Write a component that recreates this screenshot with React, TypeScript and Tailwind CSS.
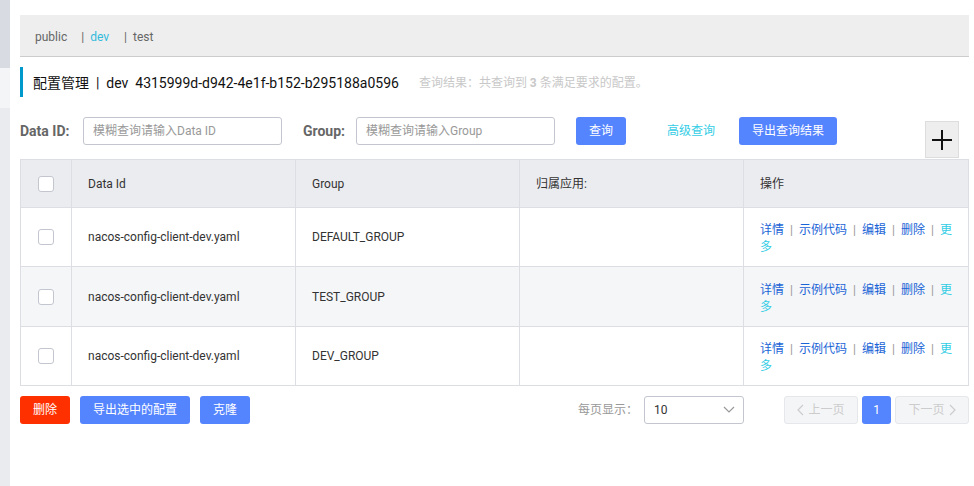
import React from "react";

const font = { fontFamily: 'Roboto, "Noto Sans CJK SC", sans-serif' };

function Checkbox() {
  return <div className="w-4 h-4 rounded-[3px] border border-[#c4c6cf] bg-white" />;
}

const rows = [
  { id: "nacos-config-client-dev.yaml", group: "DEFAULT_GROUP", bg: "bg-white", h: "h-[59px]" },
  { id: "nacos-config-client-dev.yaml", group: "TEST_GROUP", bg: "bg-[#f5f6f8]", h: "h-[60px]" },
  { id: "nacos-config-client-dev.yaml", group: "DEV_GROUP", bg: "bg-white", h: "h-[58px]" },
];

function Sep() {
  return <span className="inline-block w-[15px] text-center text-[#999]">|</span>;
}

function Ops() {
  return (
    <div className="text-[12px] leading-[17px] text-[#1964d6] pt-[4px]">
      <div className="flex">
        <span>详情</span><Sep /><span>示例代码</span><Sep /><span>编辑</span><Sep /><span>删除</span><Sep />
        <span className="text-[#33cde5]">更</span>
      </div>
      <div className="text-[#33cde5]">多</div>
    </div>
  );
}

export default function App() {
  return (
    <div className="w-[974px] h-[486px] flex bg-white overflow-hidden" style={font}>
      <div className="w-[10px] flex flex-col shrink-0">
        <div className="h-[68px] bg-[#d8dbe1]" />
        <div className="h-[40px] bg-[#f4f5f7]" />
        <div className="flex-1 bg-[#e9ebee]" />
      </div>
      <div className="flex-1 pl-[10px] pr-[5px] pt-[15px]">
        <div className="h-[42px] bg-[#eeeeee] border-b border-[#cccccc] flex items-center pt-[2px] pl-[15px] text-[12px] text-[#666]">
          <span>public</span>
          <span className="ml-[14px]">|</span>
          <span className="ml-[6px] text-[#33bbdd]">dev</span>
          <span className="ml-[15px]">|</span>
          <span className="ml-[6px]">test</span>
        </div>
        <div className="mt-[10px] h-[30px] border-l-[3px] border-[#0099cc] flex items-center pl-[10px] pt-[2px]">
          <span className="text-[14px] text-[#111]">配置管理 &nbsp;|&nbsp; dev&nbsp; 4315999d-d942-4e1f-b152-b295188a0596</span>
          <span className="ml-[20px] text-[12px] text-[#c8c8c8]">查询结果：共查询到 <b className="font-bold">3</b> 条满足要求的配置。</span>
        </div>
        <div className="mt-[20px] flex items-start">
          <div className="h-[28px] flex items-center">
            <span className="text-[14px] font-bold text-[#666] w-[63px]">Data ID:</span>
            <div className="w-[199px] h-[28px] rounded-[3px] border border-[#c4c6cf] flex items-center pl-[9px] text-[12px] text-[#999]">模糊查询请输入Data ID</div>
            <span className="ml-[21px] text-[14px] font-bold text-[#666] w-[53px]">Group:</span>
            <div className="w-[199px] h-[28px] rounded-[3px] border border-[#c4c6cf] flex items-center pl-[9px] text-[12px] text-[#999]">模糊查询请输入Group</div>
            <div className="ml-[21px] w-[50px] h-[28px] rounded-[3px] bg-[#5584ff] text-white text-[12px] flex items-center justify-center">查询</div>
            <div className="ml-[41px] text-[12px] text-[#33cde5]">高级查询</div>
            <div className="ml-[24px] w-[98px] h-[28px] rounded-[3px] bg-[#5584ff] text-white text-[12px] flex items-center justify-center">导出查询结果</div>
          </div>
          <div className="ml-auto mr-[10px] mt-[4px] w-[34px] h-[37px] bg-[#eeeeee] border border-[#dddddd] flex items-center justify-center">
            <svg width="20" height="20" viewBox="0 0 20 20"><path d="M10 0v20M0 10h20" stroke="#111" strokeWidth="2" /></svg>
          </div>
        </div>
        <div className="mt-[1px] w-[949px] border border-[#dcdee3] text-[12px] text-[#333]">
          <div className="h-[48px] bg-[#ebecf0] flex border-b border-[#dcdee3]">
            <div className="w-[51px] flex items-center justify-center border-r border-[#dcdee3]"><Checkbox /></div>
            <div className="w-[224px] flex items-center pl-[16px] border-r border-[#dcdee3]">Data Id</div>
            <div className="w-[224px] flex items-center pl-[16px] border-r border-[#dcdee3]">Group</div>
            <div className="w-[224px] flex items-center pl-[16px] border-r border-[#dcdee3]">归属应用:</div>
            <div className="flex-1 flex items-center pl-[16px]">操作</div>
          </div>
          {rows.map((r, i) => (
            <div key={i} className={`${r.h} flex ${r.bg} ${i < 2 ? "border-b border-[#dcdee3]" : ""}`}>
              <div className="w-[51px] flex items-center justify-center border-r border-[#dcdee3]"><Checkbox /></div>
              <div className="w-[224px] flex items-center pl-[16px] border-r border-[#dcdee3]">{r.id}</div>
              <div className="w-[224px] flex items-center pl-[16px] border-r border-[#dcdee3]">{r.group}</div>
              <div className="w-[224px] border-r border-[#dcdee3]" />
              <div className="flex-1 flex items-center pl-[16px]"><Ops /></div>
            </div>
          ))}
        </div>
        <div className="mt-[10px] flex items-center text-[12px] w-[949px]">
          <div className="w-[50px] h-[28px] rounded-[3px] bg-[#ff3000] text-white flex items-center justify-center">删除</div>
          <div className="ml-[10px] w-[110px] h-[28px] rounded-[3px] bg-[#5584ff] text-white flex items-center justify-center">导出选中的配置</div>
          <div className="ml-[10px] w-[50px] h-[28px] rounded-[3px] bg-[#5584ff] text-white flex items-center justify-center">克隆</div>
          <div className="ml-auto text-[#999]">每页显示：</div>
          <div className="ml-[6px] w-[100px] h-[28px] rounded-[3px] border border-[#c4c6cf] flex items-center pl-[9px] pr-[8px] text-[#333]">
            <span>10</span>
            <svg className="ml-auto" width="12" height="8" viewBox="0 0 12 8"><path d="M1 1l5 5 5-5" fill="none" stroke="#999" strokeWidth="1.2" /></svg>
          </div>
          <div className="ml-[40px] w-[74px] h-[28px] rounded-[3px] border border-[#e6e7eb] bg-[#f4f5f7] text-[#ccc] flex items-center justify-center gap-[4px]">
            <svg width="7" height="12" viewBox="0 0 7 12"><path d="M6 1L1 6l5 5" fill="none" stroke="#ccc" strokeWidth="1.2" /></svg>
            上一页
          </div>
          <div className="ml-[4px] w-[29px] h-[28px] rounded-[3px] bg-[#5584ff] text-white flex items-center justify-center">1</div>
          <div className="ml-[4px] w-[74px] h-[28px] rounded-[3px] border border-[#e6e7eb] bg-[#f4f5f7] text-[#ccc] flex items-center justify-center gap-[4px]">
            下一页
            <svg width="7" height="12" viewBox="0 0 7 12"><path d="M1 1l5 5-5 5" fill="none" stroke="#ccc" strokeWidth="1.2" /></svg>
          </div>
        </div>
      </div>
    </div>
  );
}
